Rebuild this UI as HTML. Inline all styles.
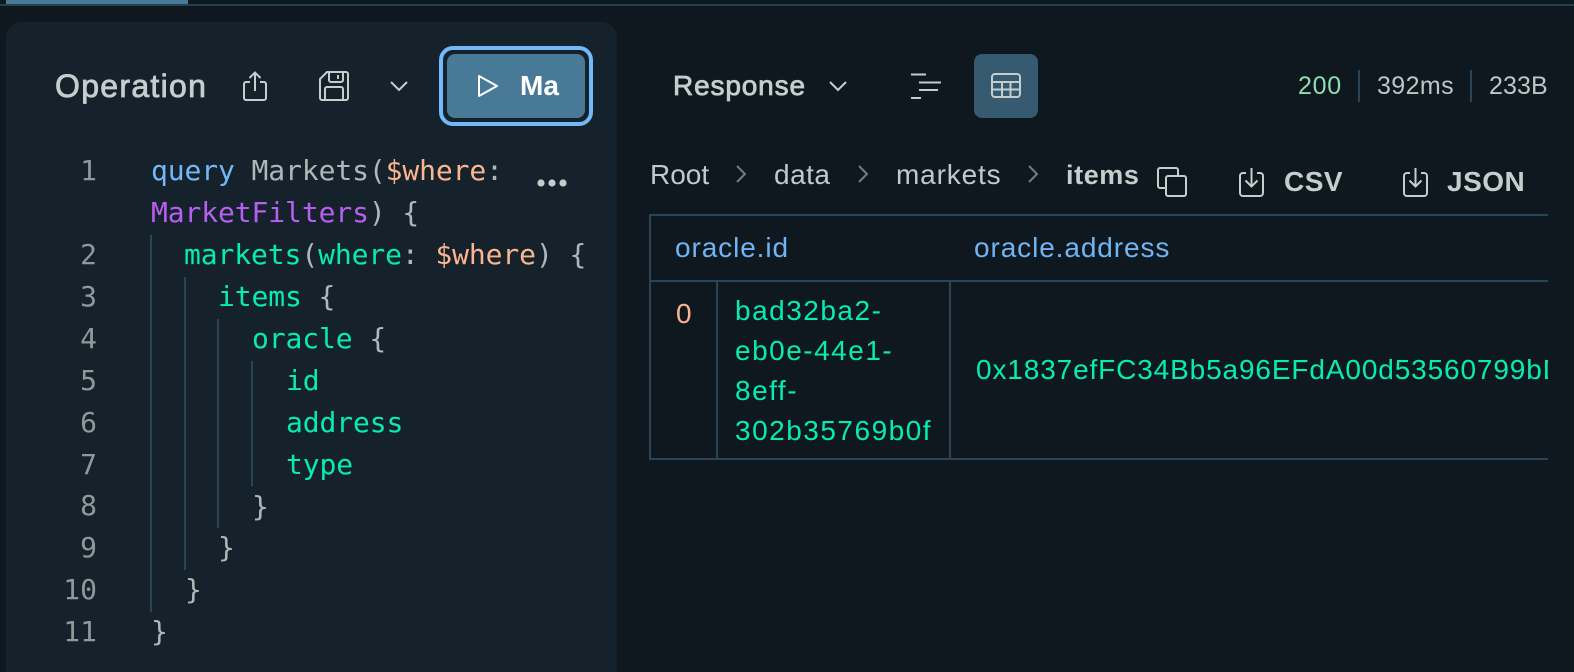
<!DOCTYPE html>
<html><head><meta charset="utf-8">
<style>
html,body{margin:0;padding:0;background:#0f181e;width:1574px;height:672px;overflow:hidden}
#r{position:relative;width:1574px;height:672px;overflow:hidden;font-family:"Liberation Sans",sans-serif}
#r div,#r span.t{position:absolute}
.t{white-space:nowrap;line-height:42px;height:42px}
.c{font-family:"DejaVu Sans Mono",monospace;font-size:28px;color:#adb8b8;letter-spacing:-.1px;white-space:pre}
.n{font-family:"DejaVu Sans Mono",monospace;font-size:28px;color:#8e9a9a;text-align:right;width:60px;left:37px;white-space:pre}
.g{width:2px;background:#294557}
.k{color:#73b8f8}.v{color:#fcb58f}.p{color:#b75ff0}.f{color:#08ecb0}
.h{font-weight:700;font-size:28px;color:#c6cdcd}
.s{font-weight:400;color:#c6cdcd;-webkit-text-stroke:.8px #c6cdcd}
.b{font-size:28px;color:#c0caca}
.m{font-size:25px;color:#bcc6c6}
.o{font-size:28px;color:#70b4f4;letter-spacing:.9px}
.d{font-size:28px;color:#08ecb0;letter-spacing:1.5px}
svg{position:absolute;overflow:visible;fill:none}
</style></head><body><div id="r">
<div style="left:0;top:4px;width:1574px;height:2px;background:#24404f"></div>
<div style="left:6px;top:0;width:182px;height:4px;background:#487a97"></div>

<div style="left:6px;top:22px;width:611px;height:650px;background:#15222c;border-radius:16px 16px 0 0"></div>

<span class="t s" style="left:55px;top:65px;font-size:32px;letter-spacing:1.3px">Operation</span>

<svg style="left:243px;top:71px" width="24" height="30" viewBox="0 0 24 30" stroke="#c6cdcd" stroke-width="2"><path d="M7 11H3a2 2 0 0 0-2 2v14a2 2 0 0 0 2 2h18a2 2 0 0 0 2-2V13a2 2 0 0 0-2-2h-4"/><path d="M12 20V2M6.500 7L12 1.500 17.500 7"/></svg>

<svg style="left:319px;top:71px" width="30" height="30" viewBox="0 0 30 30" stroke="#c6cdcd" stroke-width="2"><path d="M8 1h19a2 2 0 0 1 2 2v24a2 2 0 0 1-2 2H3a2 2 0 0 1-2-2V8z"/><path d="M10 1v8a2 2 0 0 0 2 2h10a2 2 0 0 0 2-2V1"/><path d="M19 4v4"/><path d="M6 29V18a2 2 0 0 1 2-2h14a2 2 0 0 1 2 2v11"/></svg>

<svg style="left:390px;top:81px" width="18" height="10" viewBox="0 0 18 10" stroke="#c6cdcd" stroke-width="2"><path d="M1 1l8 8 8-8"/></svg>

<div style="left:439px;top:46px;width:146px;height:72px;border:4px solid #73b8f8;border-radius:14px;background:#15222c"></div>
<div style="left:447px;top:54px;width:138px;height:64px;background:#487a97;border-radius:8px"></div>
<svg style="left:478px;top:75px" width="20" height="22" viewBox="0 0 20 22" stroke="#fff" stroke-width="2" stroke-linejoin="round"><path d="M1 1v20L19 11z"/></svg>
<span class="t" style="left:520px;top:65px;font-size:28px;font-weight:700;color:#fff">Ma</span>

<span class="t n" style="top:150px">1</span>
<span class="t n" style="top:234px">2</span>
<span class="t n" style="top:276px">3</span>
<span class="t n" style="top:318px">4</span>
<span class="t n" style="top:360px">5</span>
<span class="t n" style="top:402px">6</span>
<span class="t n" style="top:444px">7</span>
<span class="t n" style="top:485px">8</span>
<span class="t n" style="top:527px">9</span>
<span class="t n" style="top:569px">10</span>
<span class="t n" style="top:611px">11</span>

<div class="g" style="left:150px;top:235px;height:377px"></div>
<div class="g" style="left:184px;top:277px;height:293px"></div>
<div class="g" style="left:217px;top:319px;height:209px"></div>
<div class="g" style="left:251px;top:361px;height:125px"></div>

<span class="t c" style="left:151px;top:150px"><span class="k">query</span> Markets(<span class="v">$where</span>:</span>
<span class="t c" style="left:151px;top:192px"><span class="p">MarketFilters</span>) {</span>
<span class="t c" style="left:184px;top:234px"><span class="f">markets</span>(<span class="f">where</span>: <span class="v">$where</span>) {</span>
<span class="t c f" style="left:218px;top:276px">items <span style="color:#adb8b8">{</span></span>
<span class="t c f" style="left:252px;top:318px">oracle <span style="color:#adb8b8">{</span></span>
<span class="t c f" style="left:286px;top:360px">id</span>
<span class="t c f" style="left:286px;top:402px">address</span>
<span class="t c f" style="left:286px;top:444px">type</span>
<span class="t c" style="left:252px;top:486px">}</span>
<span class="t c" style="left:218px;top:527px">}</span>
<span class="t c" style="left:185px;top:569px">}</span>
<span class="t c" style="left:151px;top:611px">}</span>

<svg style="left:537px;top:179px" width="30" height="8" viewBox="0 0 30 8"><circle cx="4" cy="4" r="3.600" fill="#c6cdcd"/><circle cx="15" cy="4" r="3.600" fill="#c6cdcd"/><circle cx="26" cy="4" r="3.600" fill="#c6cdcd"/></svg>

<span class="t s" style="left:673px;top:65px;font-size:28px;letter-spacing:.85px">Response</span>
<svg style="left:829px;top:81px" width="18" height="10" viewBox="0 0 18 10" stroke="#c6cdcd" stroke-width="2"><path d="M1 1l8 8 8-8"/></svg>

<svg style="left:911px;top:73px" width="30" height="26" viewBox="0 0 30 26" stroke="#c6cdcd" stroke-width="2"><path d="M0 1.500h15M8 9.500h22M8 17h19M0 25h10"/></svg>

<div style="left:974px;top:54px;width:64px;height:64px;background:#365b71;border-radius:8px"></div>
<svg style="left:991px;top:73px" width="30" height="25" viewBox="0 0 30 25" stroke="#c6cdcd" stroke-width="2"><rect x="1" y="1" width="28" height="23" rx="3"/><path d="M1 9h28M1 16.500h28M11 9v15M19.500 9v15"/></svg>

<span class="t" style="left:1298px;top:65px;font-size:25px;color:#93dcb0;letter-spacing:.7px">200</span>
<div style="left:1358px;top:70px;width:2px;height:32px;background:#294557"></div>
<span class="t m" style="left:1377px;top:65px;letter-spacing:.4px">392ms</span>
<div style="left:1470px;top:70px;width:2px;height:32px;background:#294557"></div>
<span class="t m" style="left:1489px;top:65px;letter-spacing:.1px">233B</span>

<span class="t b" style="left:650px;top:154px">Root</span>
<svg style="left:736px;top:165px" width="11" height="18" viewBox="0 0 11 18" stroke="#6f7f80" stroke-width="2"><path d="M1 1l8 8-8 8"/></svg>
<span class="t b" style="left:774px;top:154px;letter-spacing:.5px">data</span>
<svg style="left:858px;top:165px" width="11" height="18" viewBox="0 0 11 18" stroke="#6f7f80" stroke-width="2"><path d="M1 1l8 8-8 8"/></svg>
<span class="t b" style="left:896px;top:154px;letter-spacing:.85px">markets</span>
<svg style="left:1028px;top:165px" width="11" height="18" viewBox="0 0 11 18" stroke="#6f7f80" stroke-width="2"><path d="M1 1l8 8-8 8"/></svg>
<span class="t h" style="left:1066px;top:154px;font-size:27px;letter-spacing:.6px">items</span>

<svg style="left:1157px;top:167px" width="30" height="30" viewBox="0 0 30 30" stroke="#c6cdcd" stroke-width="2"><path d="M8 21H3a2 2 0 0 1-2-2V3a2 2 0 0 1 2-2h16a2 2 0 0 1 2 2v5"/><rect x="9" y="9" width="20" height="20" rx="2"/></svg>

<svg style="left:1239px;top:167px" width="25" height="30" viewBox="0 0 25 30" stroke="#c6cdcd" stroke-width="2"><path d="M7 6H4a3 3 0 0 0-3 3v17a3 3 0 0 0 3 3h17a3 3 0 0 0 3-3V9a3 3 0 0 0-3-3h-3"/><path d="M12.500 1v18M6.500 13.500l6 6 6-6"/></svg>
<span class="t h" style="left:1284px;top:161px;font-size:28px;letter-spacing:.5px">CSV</span>

<svg style="left:1403px;top:167px" width="25" height="30" viewBox="0 0 25 30" stroke="#c6cdcd" stroke-width="2"><path d="M7 6H4a3 3 0 0 0-3 3v17a3 3 0 0 0 3 3h17a3 3 0 0 0 3-3V9a3 3 0 0 0-3-3h-3"/><path d="M12.500 1v18M6.500 13.500l6 6 6-6"/></svg>
<span class="t h" style="left:1447px;top:161px;font-size:28px;letter-spacing:.5px">JSON</span>

<div style="left:649px;top:214px;width:899px;height:2px;background:#294557"></div>
<div style="left:649px;top:280px;width:899px;height:2px;background:#294557"></div>
<div style="left:649px;top:458px;width:899px;height:2px;background:#294557"></div>
<div style="left:649px;top:214px;width:2px;height:246px;background:#294557"></div>
<div style="left:716px;top:281px;width:2px;height:178px;background:#294557"></div>
<div style="left:949px;top:281px;width:2px;height:178px;background:#294557"></div>

<span class="t o" style="left:675px;top:227px">oracle.id</span>
<span class="t o" style="left:974px;top:227px">oracle.address</span>
<span class="t" style="left:676px;top:293px;font-size:28px;color:#fcb58f">0</span>
<span class="t d" style="left:735px;top:290px">bad32ba2-</span>
<span class="t d" style="left:735px;top:330px">eb0e-44e1-</span>
<span class="t d" style="left:735px;top:370px">8eff-</span>
<span class="t d" style="left:735px;top:410px">302b35769b0f</span>
<div style="left:976px;top:349px;width:572px;height:42px;overflow:hidden"><span class="t d" style="left:0;top:0;letter-spacing:.87px">0x1837efFC34Bb5a96EFdA00d53560799bD5b</span></div>
</div></body></html>
